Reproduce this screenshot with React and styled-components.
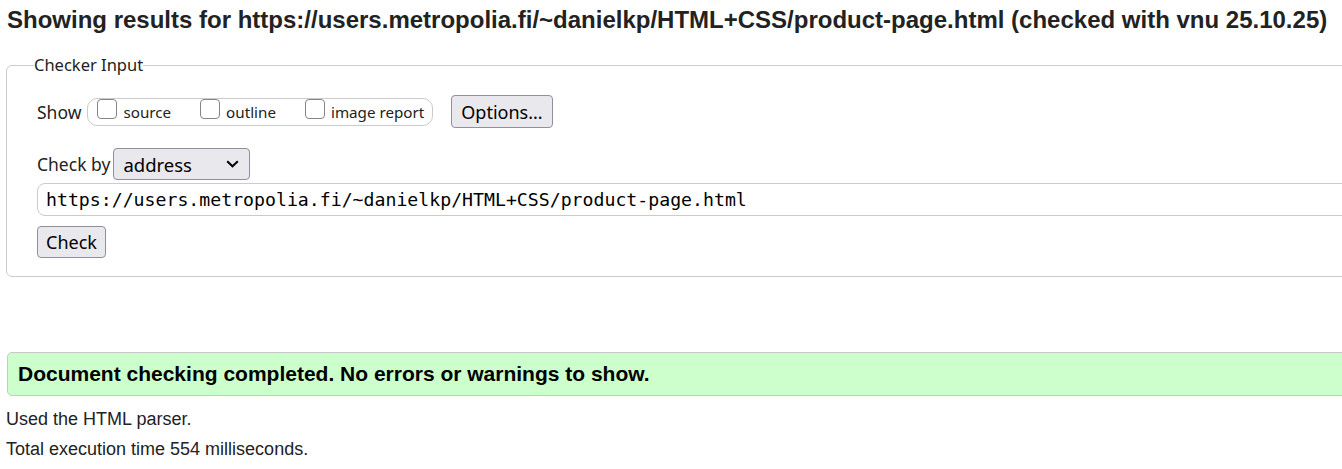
import React from "react";
import styled, { createGlobalStyle } from "styled-components";

const Global = createGlobalStyle`
  html, body { margin: 0; padding: 0; background: #fff; overflow-x: hidden; }
  body { color: #222; font-family: "Liberation Sans", Arial, sans-serif; }
`;

const Page = styled.div`
  padding: 0 0 0 6px;
  width: 1400px;
`;

const Title = styled.h2`
  margin: 0;
  padding: 6px 0 0 1px;
  font-size: 24px;
  line-height: 28px;
  font-weight: bold;
  color: #222;
  white-space: nowrap;
`;

const Fieldset = styled.fieldset`
  margin: 20px 0 0 0;
  padding: 11px 0 18px 30px;
  border: 1px solid #cbcbcb;
  border-radius: 6px;
  min-width: 0;
  font-family: "Noto Sans", "Segoe UI", sans-serif;
  font-size: 16px;
  color: #222;
`;

const Legend = styled.legend`
  padding: 0;
  margin-left: -3px;
  font-size: 16.5px;
  line-height: 22px;
  color: #222;
`;

const Row = styled.div`
  display: flex;
  align-items: center;
  margin-top: ${(p) => p.$mt || 0}px;
`;

const Label = styled.span`
  font-size: 17.5px;
  color: #222;
  margin-right: ${(p) => p.$mr || 0}px;
`;

const Group = styled.div`
  display: flex;
  align-items: center;
  height: 28px;
  box-sizing: border-box;
  padding: 0 8px 0 9px;
  border: 1px solid #cbcbcb;
  border-radius: 10px;
  margin-left: 6px;
`;

const Option = styled.label`
  display: flex;
  align-items: center;
  font-size: 15.2px;
  color: #222;
  margin-right: ${(p) => p.$mr || 0}px;
`;

const Box = styled.input.attrs({ type: "checkbox" })`
  appearance: none;
  width: 20px;
  height: 20px;
  margin: -6px 6px 0 0;
  border: 1px solid #858585;
  border-radius: 4px;
  background: #fff;
  box-sizing: border-box;
`;

const Button = styled.button`
  font-family: "Noto Sans", "Segoe UI", sans-serif;
  font-size: 18px;
  height: ${(p) => p.$h || 32}px;
  padding: 0 ${(p) => p.$px || 7}px;
  background: #e9e9ed;
  border: 1px solid #8f8f9d;
  border-radius: 4px;
  color: #000;
  margin-left: ${(p) => p.$ml || 0}px;
  line-height: 1;
`;

const SelectBox = styled.div`
  display: flex;
  align-items: center;
  justify-content: space-between;
  width: 137px;
  height: 32px;
  box-sizing: border-box;
  padding: 0 10px 0 9px;
  background: #e9e9ed;
  border: 1px solid #8f8f9d;
  border-radius: 4px;
  font-size: 18.5px;
  color: #000;
`;

const UrlInput = styled.div`
  margin-top: 3px;
  height: 33px;
  box-sizing: border-box;
  border: 1px solid #cbcbcb;
  border-radius: 8px;
  display: flex;
  align-items: center;
  padding-left: 8px;
  font-family: "DejaVu Sans Mono", "Liberation Mono", monospace;
  font-size: 18.2px;
  color: #000;
  white-space: nowrap;
`;

const Result = styled.div`
  margin: 75px 0 0 1px;
  height: 44px;
  box-sizing: border-box;
  background: #ccffcc;
  border: 1px solid #c8c8c8;
  border-radius: 5px;
  display: flex;
  align-items: center;
  padding-left: 10px;
  font-weight: bold;
  font-size: 21px;
  color: #000;
`;

const Note = styled.p`
  margin: ${(p) => p.$mt || 0}px 0 0 0;
  font-size: 18px;
  line-height: 20px;
  color: #222;
`;

const Chevron = () => (
  <svg width="13" height="8" viewBox="0 0 13 8">
    <path d="M1.2 1.2 L6.5 6.3 L11.8 1.2" fill="none" stroke="#000" strokeWidth="2" />
  </svg>
);

export default function App() {
  return (
    <>
      <Global />
      <Page>
        <Title>
          Showing results for https://users.metropolia.fi/~danielkp/HTML+CSS/product-page.html (checked with vnu 25.10.25)
        </Title>
        <Fieldset>
          <Legend>Checker Input</Legend>
          <Row $mt={8}>
            <Label>Show</Label>
            <Group>
              <Option $mr={29}><Box />source</Option>
              <Option $mr={29}><Box />outline</Option>
              <Option><Box />image report</Option>
            </Group>
            <Button $ml={18} $px={9} $h={33}>Options...</Button>
          </Row>
          <Row $mt={20}>
            <Label $mr={3}>Check by</Label>
            <SelectBox>
              <span>address</span>
              <Chevron />
            </SelectBox>
          </Row>
          <UrlInput>https://users.metropolia.fi/~danielkp/HTML+CSS/product-page.html</UrlInput>
          <Row $mt={10}>
            <Button $px={8}>Check</Button>
          </Row>
        </Fieldset>
        <Result>Document checking completed. No errors or warnings to show.</Result>
        <Note $mt={13}>Used the HTML parser.</Note>
        <Note $mt={10}>Total execution time 554 milliseconds.</Note>
      </Page>
    </>
  );
}
